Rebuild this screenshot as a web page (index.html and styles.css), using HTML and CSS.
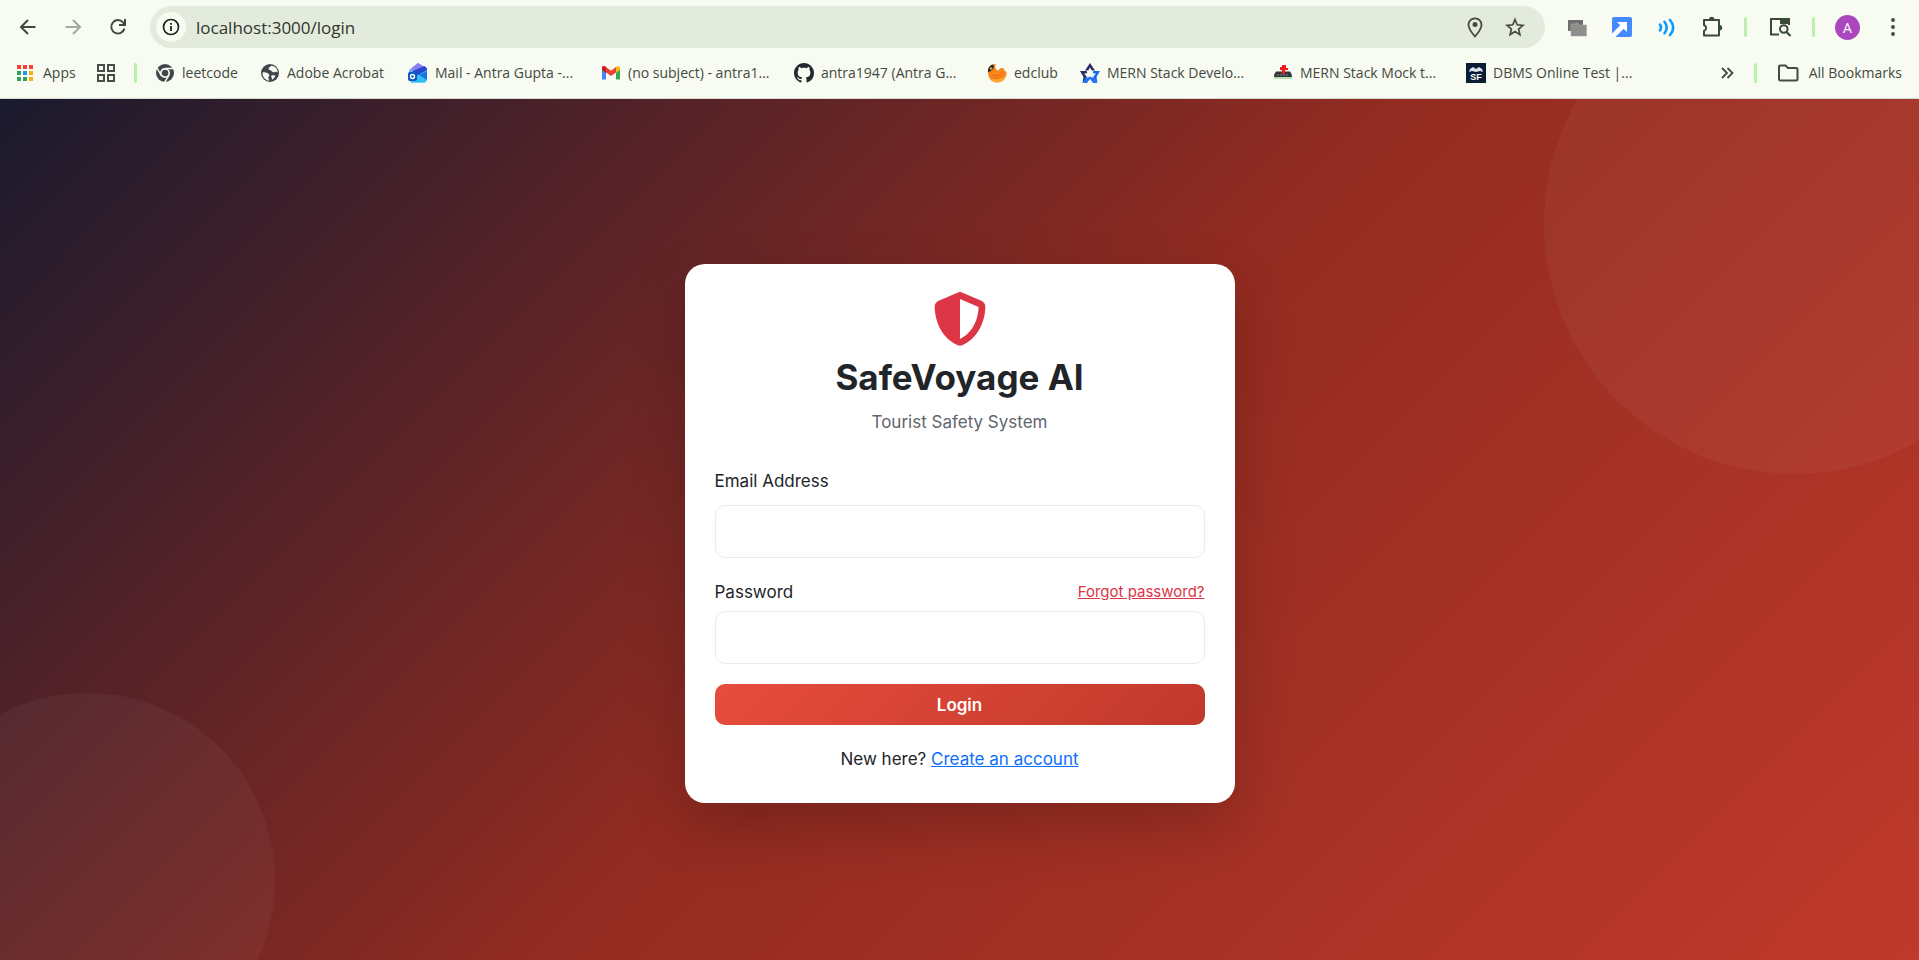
FILE: index.html
```html
<!DOCTYPE html>
<html lang="en">
  <head>
    <meta charset="utf-8">
    <title>SafeVoyage AI - Login</title>
    <link rel="stylesheet" href="styles.css">
  </head>
  <body>
    <header class="browser">
      <div class="toolbar">
        <button class="tool" aria-label="Back">
          <svg width="20" height="20" viewBox="0 0 20 20" fill="none" stroke="#3f4a3c" stroke-width="2"><path d="M17.500 10H3.500M10 3L3 10l7 7"/></svg>
        </button>
        <button class="tool" aria-label="Forward">
          <svg width="20" height="20" viewBox="0 0 20 20" fill="none" stroke="#a3a8a0" stroke-width="2"><path d="M2.500 10h14M10 3l7 7-7 7"/></svg>
        </button>
        <button class="tool" aria-label="Reload">
          <svg width="20" height="20" viewBox="0 0 20 20" fill="none" stroke="#3f4a3c" stroke-width="2"><path d="M16.500 11.500A6.700 6.700 0 1 1 15 5.300L17 7.500M17 2v6h-6"/></svg>
        </button>

        <div class="address">
          <button class="site-info" aria-label="Site information">
            <svg width="18" height="18" viewBox="0 0 18 18"><circle cx="9" cy="9" r="7.500" fill="none" stroke="#1f231e" stroke-width="1.700"/><path d="M8.100 8h1.800v5H8.100zM8.100 5h1.800v1.800H8.100z" fill="#1f231e"/></svg>
          </button>
          <input type="text" class="url" aria-label="Address" value="localhost:3000/login">
          <button class="address-icon" aria-label="Location">
            <svg width="20" height="22" viewBox="0 0 20 22"><path d="M10 20.500C5.500 15.500 3.500 12 3.500 8.800a6.500 6.500 0 0 1 13 0c0 3.200-2 6.700-6.500 11.700z" fill="none" stroke="#444941" stroke-width="1.800"/><circle cx="10" cy="8.500" r="2.500" fill="#444941"/></svg>
          </button>
          <button class="address-icon" aria-label="Bookmark this page">
            <svg width="20" height="20" viewBox="0 0 20 20" fill="none" stroke="#444941" stroke-width="1.700"><path d="M10 2.500l2.200 5.300 5.700.5-4.300 3.700 1.300 5.600-4.900-3-4.900 3 1.300-5.600L2.100 8.300l5.700-.5z"/></svg>
          </button>
        </div>

        <button class="tool" aria-label="Windows extension">
          <svg width="20" height="20" viewBox="0 0 20 20"><path d="M1 3h15v11H1z" fill="#6f706e"/><path d="M4 7h5v-1h2v2h8.500v11H4z" fill="#8e8f8d" stroke="#a8a9a6" stroke-width=".6"/></svg>
        </button>
        <button class="tool" aria-label="Share extension">
          <svg width="22" height="22" viewBox="0 0 22 22"><rect x="1" y="1" width="20" height="20" rx="2" fill="#448aff"/><path d="M6 6h10v10l-3.300-3.300L4.500 21H1v-3.500L9.300 9.300z" fill="#fff"/></svg>
        </button>
        <button class="tool" aria-label="Sound extension">
          <svg width="20" height="20" viewBox="0 0 20 20" fill="none" stroke="#0a9bff" stroke-width="2.600" stroke-linecap="round"><path d="M3 7.500q2 3 0 6M7.500 4.800q4.500 5.700 0 11.400M13 3q6.500 7.500 0 15"/></svg>
        </button>
        <button class="tool" aria-label="Extensions">
          <svg width="22" height="22" viewBox="0 0 22 22"><path d="M3 4h15v15.500H3v-4.500a3.200 3.200 0 0 0 0-6z" fill="none" stroke="#394a37" stroke-width="2" stroke-linejoin="round"/><path d="M8 3.500a2.700 2.700 0 0 1 5.400 0zM18.500 9a2.700 2.700 0 0 1 0 5.400z" fill="#394a37"/></svg>
        </button>
        <span class="divider"></span>
        <button class="tool" aria-label="Search tabs">
          <svg width="24" height="22" viewBox="0 0 24 22"><path d="M11 18.500H3V3h18v6" fill="none" stroke="#394a37" stroke-width="2"/><path d="M12 2h10v6H12z" fill="#394a37"/><circle cx="15.800" cy="13" r="3.800" fill="none" stroke="#394a37" stroke-width="2"/><path d="M18.500 16l4 4" stroke="#394a37" stroke-width="2.200"/></svg>
        </button>
        <span class="divider"></span>
        <button class="tool" aria-label="Profile"><span class="avatar">A</span></button>
        <button class="tool" aria-label="Menu">
          <svg width="20" height="20" viewBox="0 0 20 20" fill="#3f4a3c"><circle cx="10" cy="3" r="1.900"/><circle cx="10" cy="10" r="1.900"/><circle cx="10" cy="17" r="1.900"/></svg>
        </button>
      </div>

      <nav class="bookmarks">
        <a href="#" class="bookmark apps">
          <svg width="18" height="18" viewBox="0 0 18 18"><path d="M1 1h4v4H1zM7 1h4v4H7zM13 1h4v4h-4z" fill="#f44336"/><path d="M1 7h4v4H1zM1 13h4v4H1zM7 13h4v4H7z" fill="#34a062"/><path d="M7 7h4v4H7z" fill="#2196f3"/><path d="M13 7h4v4h-4zM13 13h4v4h-4z" fill="#fbb10a"/></svg>
          Apps
        </a>
        <button class="groups" aria-label="Tab groups">
          <svg width="20" height="20" viewBox="0 0 20 20" fill="none" stroke="#4a4c48" stroke-width="2"><path d="M2 2h6v6H2zM12 2h6v6h-6zM2 12h6v6H2zM12 12h6v6h-6z"/></svg>
        </button>
        <span class="divider"></span>
        <a href="#" class="bookmark leetcode">
          <svg width="20" height="20" viewBox="0 0 20 20"><circle cx="10" cy="10" r="9" fill="#41464b"/><circle cx="10" cy="10" r="4.200" fill="#41464b" stroke="#f8fbf1" stroke-width="1.700"/><path d="M10 5.500h8.300M6.200 12.300L2 5M13.800 12.300l-4.200 7" stroke="#f8fbf1" stroke-width="1.500"/></svg>
          leetcode
        </a>
        <a href="#" class="bookmark acrobat">
          <svg width="20" height="20" viewBox="0 0 20 20"><circle cx="10" cy="10" r="9" fill="#41464b"/><path d="M2.500 9.500c3-.5 6 .3 6.800 2.500.5 1.500-1.300 1.500-1 3 .2 1.200 1 1.500.7 2.700-3.800-.5-6.800-4-6.500-8.200zM11 2.700c-.5 1.500-2.500 1.300-2.500 3 0 1.500 2 1 3 2.300.8 1.200 2.500 1.600 3.600 1 .8-.4 1.600-.3 2.500.4.300-3.500-2.600-6.600-6.600-6.700zM11.500 12.500c1.300-.4 2.700.3 4 0-.8 2-2 3.500-3.500 4.200.4-1.700-1.500-3-.5-4.200z" fill="#f8fbf1"/></svg>
          Adobe Acrobat
        </a>
        <a href="#" class="bookmark wide">
          <svg width="20" height="20" viewBox="0 0 20 20"><path d="M1 7l9-7 9 5.500V17l-2 2.500H3L1 17z" fill="#6fb1ff"/><path d="M3 6l7-6 9 5.500L10 11z" fill="#8e7cf5"/><path d="M4 8.500L16.500 3 19 5.500v3L10 14z" fill="#2348c8"/><path d="M8 13l11-6v10l-2 2.500H3L8 15z" fill="#2fc3f5"/><path d="M11 12l8-4v9z" fill="#1b72e8"/><rect y="9" width="9" height="9" rx="2" fill="#1155bd"/><circle cx="4.500" cy="13.500" r="2" fill="none" stroke="#fff" stroke-width="1.400"/></svg>
          Mail - Antra Gupta -...
        </a>
        <a href="#" class="bookmark wide">
          <svg width="20" height="20" viewBox="0 0 20 20"><path d="M1 5v11.500h4V8.500z" fill="#4285f4"/><path d="M15 8.500v8h4V5z" fill="#34a853"/><path d="M1 5c0-2 2-2.500 3.300-1.500L10 7.800l5.700-4.300V9L10 13 1 6.500z" fill="#ea4335"/><path d="M15 4c2-1.500 4-.8 4 1.500v1.300L15 10z" fill="#fbbc04"/><path d="M1 5c0-2 2-2.500 4-1v6L1 7z" fill="#c5221f"/></svg>
          (no subject) - antra1...
        </a>
        <a href="#" class="bookmark wide">
          <svg width="20" height="20" viewBox="0 0 16 16" fill="#24292f"><path d="M8 0C3.580 0 0 3.580 0 8c0 3.540 2.290 6.530 5.470 7.590.4.070.55-.17.55-.38 0-.19-.01-.82-.01-1.490-2.010.37-2.530-.49-2.690-.94-.09-.23-.48-.94-.82-1.130-.28-.15-.68-.52-.01-.53.63-.01 1.080.58 1.230.82.72 1.210 1.870.87 2.330.66.07-.52.28-.87.51-1.070-1.780-.2-3.640-.89-3.640-3.950 0-.87.31-1.590.82-2.150-.08-.2-.36-1.020.08-2.120 0 0 .67-.21 2.200.82.64-.18 1.320-.27 2-.27s1.360.09 2 .27c1.530-1.040 2.200-.82 2.200-.82.44 1.100.16 1.920.08 2.120.51.56.82 1.270.82 2.150 0 3.070-1.870 3.750-3.650 3.950.29.25.54.73.54 1.480 0 1.070-.01 1.930-.01 2.200 0 .21.15.46.55.38A8.010 8.010 0 0 0 16 8c0-4.420-3.580-8-8-8z"/></svg>
          antra1947 (Antra G...
        </a>
        <a href="#" class="bookmark edclub">
          <svg width="20" height="20" viewBox="0 0 20 20"><path d="M1 9c0-5 3-8 8-8-1.500 3-.5 6 2.500 6.500 1-2.500 3.500-3 5.500-2-1 1 .5 2 2.500 3.500.5 6-4 10.500-9.500 10.500S1 15 1 9z" fill="#f9871f"/><path d="M4 16c6 1.500 12-1 15.500-5-.5 5-4.500 8.500-9.500 8.500-2 0-5-1-6-3.500z" fill="#fba832"/><path d="M4 12c5 1.500 10 .5 13-3M6 15c4 1 8 0 11-3" fill="none" stroke="#f16a12"/><path d="M1 9c-.5-4 2-7 5-7.500C8 4 6 8 1 9z" fill="#2d261c"/><circle cx="4" cy="5.500" r="1.200" fill="#c8b560"/></svg>
          edclub
        </a>
        <a href="#" class="bookmark wide">
          <svg width="20" height="20" viewBox="0 0 20 20"><path d="M10 0l5 7.500h-3.200L10 4.500 8.200 7.500H5z" fill="#272c69"/><path d="M0 8h6.500l1 2.500H4l2.500 3L5 17l-2.500 3 1-6z" fill="#272c69"/><path d="M20 8h-6.500l-1 2.500H16l-2.500 3L15 17l2.500 3-1-6z" fill="#1769e8"/><path d="M3 20l2-5 5-3 5 3 2 5h-4l-3-4-3 4z" fill="#2472f5"/><path d="M10 7l1.200 3h3L12 12l1 3-3-1.500L7 15l1-3-2.200-2h3z" fill="#f8fbf1"/></svg>
          MERN Stack Develo...
        </a>
        <a href="#" class="bookmark wide">
          <svg width="20" height="20" viewBox="0 0 20 20"><path d="M1 13h18v3H1z" fill="#b9dfb4"/><path d="M3 8.500h14q2 2 2 5.500H1q0-3.500 2-5.500z" fill="#32353a"/><path d="M4 12h12" stroke="#85888c" stroke-dasharray="2 1"/><path d="M9 2h4v3h2v2h-3v4H9V7H7V4h2z" fill="#f2191c"/></svg>
          MERN Stack Mock t...
        </a>
        <a href="#" class="bookmark wide">
          <svg width="20" height="20" viewBox="0 0 20 20"><path d="M0 0h20v20H0z" fill="#0b1c36"/><path d="M3 9l1-3 3-2 3 2 3-2 3 2 1 3-3-1-4 1-4-1z" fill="#dfe7ee"/><text x="10" y="17" class="sf">SF</text></svg>
          DBMS Online Test |...
        </a>
        <button class="more" aria-label="More bookmarks">
          <svg width="14" height="14" viewBox="0 0 14 14" fill="none" stroke="#444941" stroke-width="1.800"><path d="M2 2l5 5-5 5M7.500 2l5 5-5 5"/></svg>
        </button>
        <span class="divider"></span>
        <a href="#" class="bookmark all">
          <svg width="22" height="20" viewBox="0 0 22 20"><path d="M2 16.500v-13q0-1 1-1h5.500l2.500 2.500h8q1.500 0 1.500 1.500V16q0 1.500-1.500 1.500H3.500Q2 17.500 2 16z" fill="none" stroke="#444941" stroke-width="2"/></svg>
          All Bookmarks
        </a>
      </nav>
    </header>

    <main class="login-page">
      <div class="circle circle-top"></div>
      <div class="circle circle-bottom"></div>

      <div class="login-card">
        <svg class="shield" viewBox="0 0 512 512"><path d="M256 0c4.600 0 9.200 1 13.400 2.900L457.700 82.800c22 9.300 38.400 31 38.300 57.200c-.5 99.200-41.300 280.700-213.600 363.200c-16.700 8-36.100 8-52.800 0C57.300 420.700 16.500 239.200 16 140c-.1-26.200 16.300-47.900 38.300-57.200L242.700 2.900C246.800 1 251.400 0 256 0zm0 66.800V444.800C394 378 431.100 230.100 432 141.400L256 66.800z"/></svg>
        <h1>SafeVoyage AI</h1>
        <p class="subtitle">Tourist Safety System</p>

        <form>
          <label for="email">Email Address</label>
          <input type="email" id="email" class="field">

          <div class="password-row">
            <label for="password">Password</label>
            <a href="#" class="forgot">Forgot password?</a>
          </div>
          <input type="password" id="password" class="field">

          <button type="button" class="login-button">Login</button>
        </form>

        <p class="signup">New here? <a href="#">Create an account</a></p>
      </div>
    </main>
  </body>
</html>
```
FILE: styles.css
```css
* {
  box-sizing: border-box;
}

body {
  margin: 0;
  min-height: 100vh;
  display: flex;
  flex-direction: column;
  font-family: Inter, sans-serif;
  color: #212529;
}

button {
  border: none;
  padding: 0;
  background: none;
  font-family: inherit;
  cursor: pointer;
}

svg {
  display: block;
  flex-shrink: 0;
}

/* browser bar */
.browser {
  background-color: #f8fbf1;
  border-bottom: 1px solid #d5dccf;
  font-family: "Open Sans", sans-serif;
}

.toolbar {
  display: flex;
  align-items: center;
  height: 54px;
  padding: 0 4px 0 5px;
}

.tool {
  display: flex;
  align-items: center;
  justify-content: center;
  width: 45px;
  height: 44px;
}

.address {
  flex: 1;
  display: flex;
  align-items: center;
  height: 42px;
  margin: 0 9px 0 10px;
  padding: 0 10px 0 6px;
  border-radius: 21px;
  background-color: #e3ecdc;
}

.site-info {
  display: flex;
  align-items: center;
  justify-content: center;
  width: 30px;
  height: 30px;
  border-radius: 50%;
  background-color: #f8fbf1;
}

.url {
  flex: 1;
  min-width: 0;
  margin-left: 10px;
  padding: 0;
  border: none;
  outline: none;
  background: none;
  font-family: "Open Sans", sans-serif;
  font-size: 17px;
  color: #30352e;
}

.address-icon {
  display: flex;
  align-items: center;
  justify-content: center;
  width: 40px;
  height: 40px;
}

.divider {
  width: 3px;
  height: 20px;
  margin: 0 10px;
  border-radius: 2px;
  background-color: #baf0ae;
}

.avatar {
  width: 25px;
  height: 25px;
  border-radius: 50%;
  background-color: #ab47bc;
  color: white;
  font-size: 14px;
  line-height: 25px;
}

.bookmarks {
  display: flex;
  align-items: center;
  height: 44px;
  padding: 0 17px 7px 16px;
}

.bookmark {
  display: flex;
  align-items: center;
  gap: 7px;
  flex-shrink: 0;
  font-size: 14px;
  color: #444941;
  text-decoration: none;
  white-space: nowrap;
}

.apps {
  gap: 9px;
  width: 80px;
}

.groups {
  margin-right: 8px;
}

.leetcode {
  width: 105px;
  margin-left: 8px;
}

.acrobat {
  width: 148px;
}

.edclub {
  width: 93px;
}

.wide {
  width: 193px;
}

.sf {
  font: bold 9px "Liberation Sans", sans-serif;
  fill: white;
  text-anchor: middle;
}

.more {
  margin-left: auto;
  margin-right: 10px;
}

.all {
  gap: 10px;
  margin-left: 10px;
}

/* login page */
.login-page {
  position: relative;
  flex: 1;
  display: flex;
  align-items: center;
  justify-content: center;
  padding: 24px 16px 16px;
  overflow: hidden;
  background: linear-gradient(135deg, #1a1a2e 0%, #922b21 50%, #c0392b 100%);
}

.circle {
  position: absolute;
  border-radius: 50%;
  background-color: rgba(255, 255, 255, 0.04);
}

.circle-top {
  top: -125px;
  right: -125px;
  width: 500px;
  height: 500px;
}

.circle-bottom {
  bottom: -108px;
  left: -100px;
  width: 375px;
  height: 375px;
}

.login-card {
  position: relative;
  width: 550px;
  max-width: 100%;
  padding: 28px 30px 30px;
  border-radius: 20px;
  background-color: white;
  box-shadow: 0 24px 60px rgba(0, 0, 0, 0.2);
  font-size: 17px;
  line-height: 28px;
}

.shield {
  width: 54px;
  height: 54px;
  margin: 0 auto 8px;
  fill: #dc3545;
}

h1 {
  margin: 0 0 8px;
  font-size: 35px;
  font-weight: 700;
  line-height: 46px;
  text-align: center;
}

.subtitle {
  margin: 0 0 31px;
  color: #5f666c;
  text-align: center;
}

label {
  display: block;
}

.field {
  display: block;
  width: 100%;
  height: 53px;
  padding: 12px 16px;
  border: 1px solid #e9ebed;
  border-radius: 10px;
  font-family: inherit;
  font-size: 17px;
}

#email {
  margin: 10px 0 20px;
}

.password-row {
  display: flex;
  align-items: center;
  justify-content: space-between;
  margin-bottom: 5px;
}

.forgot {
  font-size: 15px;
  color: #dc3545;
}

.login-button {
  display: block;
  width: 100%;
  height: 41px;
  margin-top: 20px;
  border-radius: 10px;
  background: linear-gradient(135deg, #e74c3c, #c0392b);
  color: white;
  font-size: 17px;
  font-weight: 600;
}

.signup {
  margin: 20px 0 0;
  text-align: center;
}

.signup a {
  color: #0d6efd;
}
```
